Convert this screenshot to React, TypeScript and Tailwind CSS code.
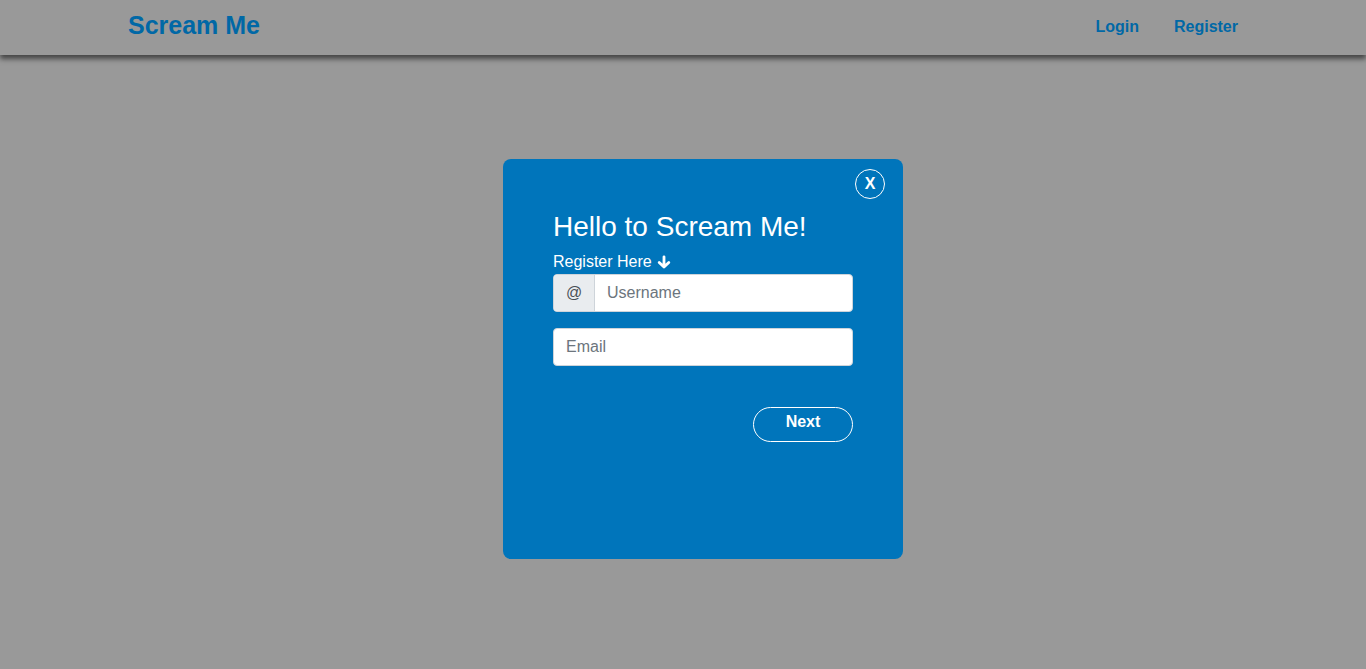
import React from 'react';

const App = () => {
  return (
    <div className="relative min-h-[669px] w-full bg-[#999999]" style={{ fontFamily: '"Liberation Sans", Arial, sans-serif' }}>
      <header className="h-[55px] bg-[#999999] shadow-[0_4px_5px_rgba(0,0,0,0.55)] flex items-center justify-between pl-[128px] pr-[128px]">
        <a className="text-[25px] font-bold text-[#0068a6] leading-none -mt-[4px]">Scream Me</a>
        <nav className="flex items-center gap-[35px] text-[16px] font-bold text-[#0068a6] -mt-[2px]">
          <a>Login</a>
          <a>Register</a>
        </nav>
      </header>

      <div className="flex justify-center pt-[104px] pl-[40px]">
        <div className="relative w-[400px] h-[400px] rounded-[8px] bg-[#0075bb] px-[50px] pt-[52px] text-white">
          <button className="absolute right-[18px] top-[10px] w-[30px] h-[30px] rounded-full border border-white flex items-center justify-center text-[16px] font-bold">
            X
          </button>
          <h2 className="text-[28px] leading-[32px]">Hello to Scream Me!</h2>
          <div className="mt-[10px] text-[16px] leading-[18px] flex items-center gap-[5px]">
            Register Here
            <svg width="14" height="14" viewBox="0 0 14 14" fill="none" stroke="currentColor" strokeWidth="2.8" strokeLinecap="round" strokeLinejoin="round">
              <path d="M7 1.8V12M2.2 7.4L7 12l4.8-4.6" />
            </svg>
          </div>
          <div className="mt-[3px] flex h-[38px] w-[300px] rounded-[4px] border border-[#ced4da] bg-white overflow-hidden">
            <span className="w-[41px] flex items-center justify-center bg-[#e9ecef] border-r border-[#ced4da] text-[16px] text-[#495057]">@</span>
            <input className="flex-1 px-[12px] text-[16px] text-[#495057] placeholder:text-[#6c757d] outline-none" placeholder="Username" />
          </div>
          <input
            className="mt-[16px] block h-[38px] w-[300px] rounded-[4px] border border-[#ced4da] bg-white px-[12px] text-[16px] text-[#495057] placeholder:text-[#6c757d] outline-none"
            placeholder="Email"
          />
          <div className="mt-[41px] flex justify-end">
            <button className="w-[100px] h-[35px] rounded-full border border-white text-[16px] font-bold pb-[6px]">Next</button>
          </div>
        </div>
      </div>
    </div>
  );
};

export default App;
